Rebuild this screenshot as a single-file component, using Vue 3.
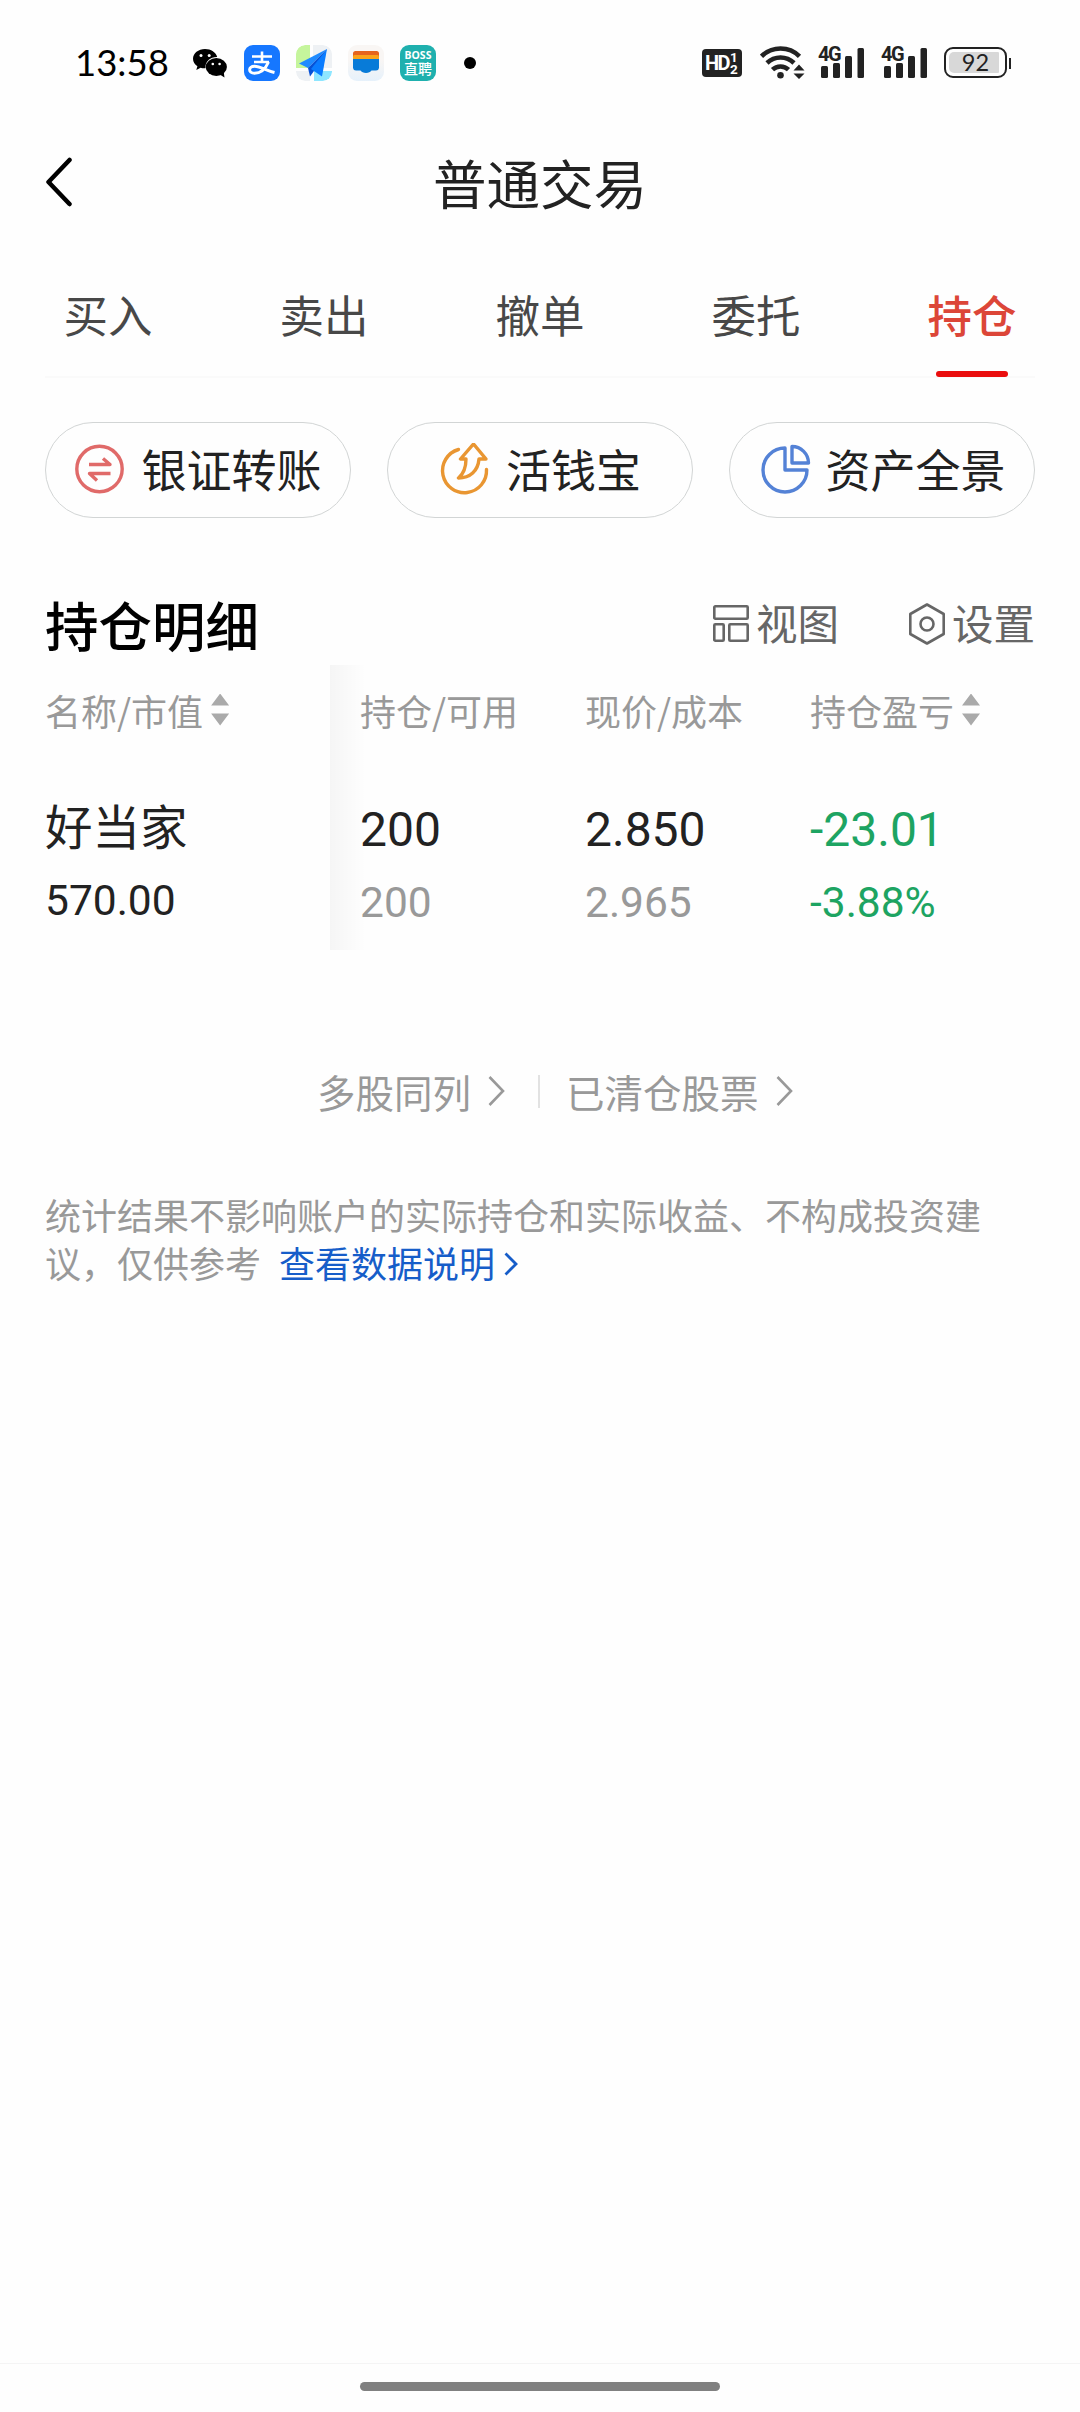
<script setup>
import { ref } from "vue";

const tabs = ["买入", "卖出", "撤单", "委托", "持仓"];
const active = ref("持仓");

// 持仓列表
const stocks = ref([
  {
    name: "好当家",
    value: "570.00",
    hold: "200",
    usable: "200",
    price: "2.850",
    cost: "2.965",
    profit: "-23.01",
    rate: "-3.88%",
  },
]);

function changeTab(tab) {
  active.value = tab;
}
</script>

<template>
  <div class="page">
    <!-- 状态栏 -->
    <div class="status">
      <span class="time">13:58</span>
      <svg class="wechat" viewBox="0 0 34 28">
        <path d="M12 0C5.400 0 0 4.300 0 9.800c0 3.100 1.700 5.700 4.400 7.500L3.300 21l4.300-2.200c1.500.4 3 .6 4.900.5C12 12.500 17.400 8 24.200 8.100 23 3.300 18 0 12 0z" />
        <ellipse cx="23.300" cy="18" rx="10.600" ry="9" />
        <path d="M26 25l5.500 3.500-.8-5.500z" />
        <g fill="#fff">
          <circle cx="8" cy="6.500" r="1.500" />
          <circle cx="16.200" cy="6.500" r="1.500" />
          <circle cx="19.800" cy="15" r="1.300" />
          <circle cx="26.600" cy="15" r="1.300" />
        </g>
      </svg>
      <div class="app alipay">
        <svg viewBox="0 0 36 36" fill="none" stroke="#fff">
          <path d="M8 11.500h20M18 6.500v10M10 17h15" stroke-width="2.600" />
          <path d="M24.500 17c-3 7-8 11.200-14 11.200-6.500 0-6.500-7 0-7 6 0 11 4 20 6.300" stroke-width="3" />
        </svg>
      </div>
      <div class="app map">
        <svg viewBox="0 0 36 36">
          <path d="M9 0h5v23H0V9a9 9 0 0 1 9-9z" fill="#c5f59c" />
          <path d="M17 0h10a9 9 0 0 1 9 9v14H17z" fill="#eef1f4" />
          <path d="M0 26h14v10H9a9 9 0 0 1-9-9z" fill="#eef1f4" />
          <path d="M18 26h18v1a9 9 0 0 1-9 9h-9z" fill="#8ee6ff" />
          <path d="M31 4L3 18.500l9 4.500z" fill="#1f8bff" />
          <path d="M31 4L12 23l2 8.500 4-5.500z" fill="#0752d6" />
          <path d="M31 4L15 24l11 7.500z" fill="#0a7cff" />
        </svg>
      </div>
      <div class="app wallet">
        <svg viewBox="0 0 36 36">
          <rect x="5" y="6" width="26" height="12" rx="2.500" fill="#e6641c" />
          <rect x="5" y="10" width="26" height="10" rx="1.500" fill="#fba31a" />
          <path d="M5 14h26v9a3 3 0 0 1-3 2.500h-4.500c-1 1.500-3 2.500-5.500 2.500s-4.500-1-5.500-2.500H8A3 3 0 0 1 5 23z" fill="#087bd8" />
        </svg>
      </div>
      <div class="app boss">
        <span class="boss-en">BOSS</span>
        <span class="boss-cn">直聘</span>
      </div>
      <span class="dot"></span>

      <div class="system">
        <div class="hd">
          <span>HD</span>
          <div class="hd-num"><i>1</i><i>2</i></div>
        </div>
        <svg class="wifi" viewBox="0 0 45 34">
          <g fill="none" stroke="#222" stroke-width="4.600">
            <path d="M1.500 11.300a27 27 0 0 1 38 0" />
            <path d="M7 18a19.500 19.500 0 0 1 27 0" />
            <path d="M12.500 24.700a11.500 11.500 0 0 1 16 0" />
          </g>
          <circle cx="20.500" cy="30.200" r="3.300" fill="#222" />
          <path d="M39 19.500l5.500 6h-11zM39 34l5.500-5.500h-11z" fill="#222" />
        </svg>
        <div v-for="n in 2" :key="n" class="signal">
          <span>4G</span>
          <svg viewBox="0 0 47 34" fill="#222">
            <rect x="3" y="21" width="7" height="12" rx="1.500" />
            <rect x="15" y="18" width="7" height="15" rx="1.500" />
            <rect x="27" y="11" width="7" height="22" rx="1.500" />
            <rect x="39.500" y="3" width="6.500" height="30" rx="1.500" />
          </svg>
        </div>
        <div class="battery"><span>92</span></div>
        <span class="battery-cap"></span>
      </div>
    </div>

    <!-- 标题 -->
    <header class="nav">
      <svg class="back" viewBox="0 0 28 50">
        <path d="M24.500 3L3.500 25l21 22" />
      </svg>
      <h1>普通交易</h1>
    </header>

    <nav class="tabs">
      <div
        v-for="tab in tabs"
        :key="tab"
        class="tab"
        :class="{ active: tab === active }"
        @click="changeTab(tab)"
      >
        {{ tab }}
      </div>
    </nav>

    <!-- 快捷入口 -->
    <div class="shortcuts">
      <div class="pill">
        <svg viewBox="0 0 50 54" stroke="#e06a69">
          <circle cx="25.500" cy="26" r="22.700" />
          <path d="M15 21.500h21l-7-6M36.500 30.500h-21l7.500 7" stroke-linecap="butt" />
        </svg>
        <span>银证转账</span>
      </div>
      <div class="pill">
        <svg viewBox="0 0 50 54" stroke="#e99632">
          <path d="M19.500 6.500A22 22 0 1 0 47.500 26.500" />
          <path d="M34.500 1L21.500 16h5.500c0 8-1.500 14-7.500 19C31 35 39 28 40 16h7z" />
        </svg>
        <span>活钱宝</span>
      </div>
      <div class="pill">
        <svg class="pie" viewBox="0 0 50 54" stroke="#5482d6">
          <path d="M24 5a22 22 0 1 0 22 22H24z" />
          <path d="M31 3.500v16.500h16.500A16.500 16.500 0 0 0 31 3.500z" />
        </svg>
        <span>资产全景</span>
      </div>
    </div>

    <div class="heading">
      <h2>持仓明细</h2>
      <div class="tool">
        <svg viewBox="0 0 36 42">
          <rect x="1.300" y="3.300" width="33.400" height="12.400" rx="1" />
          <rect x="1.300" y="21.300" width="9.400" height="16.400" rx="1" />
          <rect x="16.300" y="21.300" width="18.400" height="16.400" rx="1" />
        </svg>
        <span>视图</span>
      </div>
      <div class="tool setting">
        <svg viewBox="0 0 36 42">
          <path d="M18 1.500l16.700 9.500v20L18 40.500 1.300 31V11z" />
          <circle cx="18" cy="21" r="6.500" />
        </svg>
        <span>设置</span>
      </div>
    </div>

    <!-- 持仓表格 -->
    <div class="table">
      <div class="row head">
        <div class="cell first">名称/市值<i class="sort"></i></div>
        <div class="cell">持仓/可用</div>
        <div class="cell">现价/成本</div>
        <div class="cell">持仓盈亏<i class="sort"></i></div>
      </div>
      <div v-for="item in stocks" :key="item.name" class="row">
        <div class="cell first">
          <div class="name">{{ item.name }}</div>
          <div class="sub value">{{ item.value }}</div>
        </div>
        <div class="cell">
          <div class="main">{{ item.hold }}</div>
          <div class="sub">{{ item.usable }}</div>
        </div>
        <div class="cell">
          <div class="main">{{ item.price }}</div>
          <div class="sub">{{ item.cost }}</div>
        </div>
        <div class="cell down">
          <div class="main">{{ item.profit }}</div>
          <div class="sub">{{ item.rate }}</div>
        </div>
      </div>
      <div class="shadow"></div>
    </div>

    <div class="links">
      <span>多股同列</span>
      <svg viewBox="0 0 17 32"><path d="M1.500 2l13.500 14L1.500 30" /></svg>
      <i class="line"></i>
      <span>已清仓股票</span>
      <svg viewBox="0 0 17 32"><path d="M1.500 2l13.500 14L1.500 30" /></svg>
    </div>

    <div class="note">
      <div>统计结果不影响账户的实际持仓和实际收益、不构成投资建</div>
      <div class="note-end">
        <span>议，仅供参考</span>
        <a>查看数据说明</a>
        <svg viewBox="0 0 14 24"><path d="M1.500 1.500L12 12 1.500 22.500" /></svg>
      </div>
    </div>

    <footer class="bottom"><div class="home"></div></footer>
  </div>
</template>

<style>
body {
  background: #fefefe;
}
</style>

<style scoped>
.page {
  width: 1080px;
  height: 2412px;
  display: flex;
  flex-direction: column;
  overflow: hidden;
  background: #fefefe;
  color: #222;
  font-family: "Noto Sans CJK SC", sans-serif;
}
svg {
  display: block;
  flex: none;
}
i {
  font-style: normal;
}

/* 状态栏 */
.status {
  height: 126px;
  box-sizing: border-box;
  padding: 0 69px 0 75px;
  display: flex;
  align-items: center;
  flex: none;
}
.time {
  width: 118px;
  margin-top: -2px;
  font: 36.5px/40px Lato, sans-serif;
  color: #000;
}
.wechat {
  width: 34px;
  height: 28px;
  margin-right: 17px;
  overflow: visible;
}
.app {
  width: 36px;
  height: 36px;
  margin-right: 16px;
  border-radius: 9px;
  overflow: hidden;
}
.app svg {
  width: 36px;
  height: 36px;
}
.alipay {
  background: #1677ff;
}
.wallet {
  background: linear-gradient(#f9f6f4 40%, #e6f1fb);
}
.boss {
  background: #1fb0ae;
  color: #fff;
  display: flex;
  flex-direction: column;
  align-items: center;
}
.boss-en {
  font: bold 10.5px/11px "Noto Sans", sans-serif;
  margin-top: 5px;
}
.boss-cn {
  font-size: 14px;
  line-height: 15px;
  font-weight: 500;
}
.dot {
  width: 12px;
  height: 12px;
  margin-left: 12px;
  border-radius: 50%;
  background: #000;
}
.system {
  margin-left: auto;
  display: flex;
  align-items: center;
}
.hd {
  width: 40px;
  height: 28px;
  margin-right: 18px;
  border-radius: 4px;
  background: #222;
  color: #fff;
  display: flex;
  align-items: center;
  justify-content: center;
  font: bold 20px/28px Roboto, sans-serif;
}
.hd span {
  width: 25px;
  letter-spacing: -1.5px;
}
.hd-num {
  width: 9px;
  font-size: 13.5px;
  line-height: 12px;
  display: flex;
  flex-direction: column;
}
.wifi {
  width: 45px;
  height: 34px;
  margin: -2px 13px 0 0;
}
.signal {
  position: relative;
  width: 47px;
  height: 34px;
  margin: -2px 16px 0 0;
}
.signal svg {
  width: 47px;
  height: 34px;
}
.signal span {
  position: absolute;
  left: 0;
  top: 0;
  padding-right: 1px;
  background: #fefefe;
  font: bold 20px/18px Roboto, sans-serif;
  letter-spacing: -1.5px;
}
.battery {
  box-sizing: border-box;
  width: 63px;
  height: 31px;
  margin-top: -1px;
  padding: 3px;
  border: 2px solid #222;
  border-radius: 9px;
  display: flex;
}
.battery span {
  width: 50px;
  border-radius: 5px 1px 1px 5px;
  background: #d8d8d8;
  font: 23.5px/20px Lato, sans-serif;
  text-align: center;
  text-indent: 3px;
}
.battery-cap {
  width: 2px;
  height: 11px;
  margin-left: 2px;
  background: #222;
}

/* 标题 */
.nav {
  height: 112px;
  padding: 0 45px;
  display: grid;
  grid-template-columns: 28px 1fr 28px;
  align-items: center;
  flex: none;
}
.back {
  width: 28px;
  height: 50px;
}
.back path {
  fill: none;
  stroke: #000;
  stroke-width: 4.5;
  stroke-linecap: round;
  stroke-linejoin: round;
}
h1 {
  margin: 0;
  text-align: center;
  font-size: 53.5px;
  line-height: 80px;
  font-weight: 400;
}

.tabs {
  height: 140px;
  display: flex;
  flex: none;
  background: linear-gradient(#fafafa, #fafafa) 45px 100% / 990px 2px no-repeat;
}
.tab {
  flex: 1;
  padding-top: 46px;
  text-align: center;
  font-size: 44.5px;
  line-height: 60px;
  color: #484848;
}
.tab.active {
  color: #dc4638;
  font-weight: 500;
}
.tab.active::after {
  content: "";
  display: block;
  width: 72px;
  height: 6px;
  margin: 27px auto 0;
  border-radius: 3px;
  background: #ea0d0d;
}

/* 快捷入口 */
.shortcuts {
  margin: 44px 45px 0;
  display: flex;
  gap: 36px;
}
.pill {
  flex: 1;
  height: 96px;
  box-sizing: border-box;
  border: 1px solid #d2d5d5;
  border-radius: 48px;
  display: flex;
  align-items: center;
  justify-content: center;
  font-size: 45px;
  line-height: 60px;
}
.pill svg {
  width: 50px;
  height: 54px;
  margin-right: 17px;
  fill: none;
  stroke-width: 3.4;
  stroke-linecap: round;
  stroke-linejoin: round;
}
.pill .pie {
  margin: 0 14px 0 3px;
}
.pill span {
  margin-top: -3px;
}

.heading {
  height: 102px;
  padding: 0 45px;
  margin-top: 45px;
  display: flex;
  align-items: center;
}
h2 {
  margin: 19px auto 0 0;
  font-size: 53.5px;
  line-height: 80px;
  font-weight: 500;
  color: #000;
}
.tool {
  margin-top: 20px;
  display: flex;
  align-items: center;
  color: #666;
  font-size: 41.5px;
  line-height: 60px;
}
.tool svg {
  width: 36px;
  height: 42px;
  margin-right: 7px;
  fill: none;
  stroke: #666;
  stroke-width: 2.6;
  stroke-linejoin: round;
}
.tool span {
  margin-top: -4px;
}
.setting {
  margin-left: 70px;
}

/* 持仓表格 */
.table {
  position: relative;
  height: 285px;
}
.row {
  display: grid;
  grid-template-columns: 315px 225px 225px 225px;
  padding-left: 45px;
}
.head {
  height: 90px;
  align-items: center;
  font-size: 36px;
  line-height: 50px;
  color: #999;
}
.head .cell {
  display: flex;
  align-items: center;
}
.sort {
  width: 18px;
  height: 32px;
  margin: -1px 0 0 8px;
  background: #aaa;
  clip-path: polygon(50% 0, 100% 12px, 100% 12.1px, 50% 12.1px, 50% 20px, 100% 20px, 50% 100%, 0 20px, 50% 20px, 50% 12.1px, 0 12.1px);
}
.name {
  margin-top: 32px;
  font-size: 47.5px;
  line-height: 76px;
}
.main {
  margin-top: 37px;
  font: 48px/76px Roboto, sans-serif;
}
.sub {
  margin-top: 1px;
  font: 42.5px/68px Roboto, sans-serif;
  color: #999;
}
.value {
  margin-top: 4px;
  color: #222;
}
.down,
.down .sub {
  color: #1da462;
}
.shadow {
  position: absolute;
  left: 330px;
  top: 0;
  width: 36px;
  height: 285px;
  background: linear-gradient(90deg, rgba(0, 0, 0, 0.035), rgba(0, 0, 0, 0));
}

.links {
  margin-top: 111px;
  padding-left: 317px;
  height: 60px;
  display: flex;
  align-items: center;
  color: #999;
  font-size: 38.5px;
  line-height: 56px;
}
.links svg {
  width: 17px;
  height: 32px;
  margin: 0 0 0 17px;
  fill: none;
  stroke: #999;
  stroke-width: 2.6;
}
.line {
  width: 2px;
  height: 33px;
  margin: 1px 26px 0 33px;
  background: #e2e2e2;
}

.note {
  margin: 69px 0 0 45px;
  font-size: 36px;
  line-height: 48px;
  color: #999;
}
.note-end {
  display: flex;
  align-items: center;
}
.note a {
  margin-left: 18px;
  color: #165dc9;
}
.note svg {
  width: 14px;
  height: 24px;
  margin: 3px 0 0 9px;
  fill: none;
  stroke: #165dc9;
  stroke-width: 2.8;
}

.bottom {
  margin-top: auto;
  height: 48px;
  border-top: 1px solid #f4f4f4;
}
.home {
  width: 360px;
  height: 9px;
  margin: 18px auto 0;
  border-radius: 5px;
  background: #808080;
}
</style>
